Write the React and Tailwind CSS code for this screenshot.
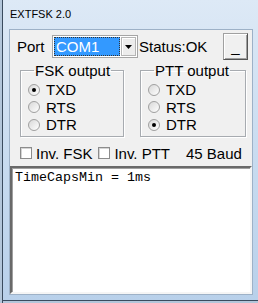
import React from 'react';

const Radio = ({ label, checked }) => (
  <div className="flex items-center h-[17.5px]">
    <span className="flex items-center justify-center w-[12px] h-[12px] rounded-full border border-[#a0a0a0] bg-linear-to-br from-[#d8d8d8] to-white">
      {checked && <span className="w-[4px] h-[4px] rounded-full bg-black" />}
    </span>
    <span className="ml-[6px] leading-[17px]">{label}</span>
  </div>
);

const GroupBox = ({ title, options, selected, className }) => (
  <fieldset
    className={`border border-[#a7abb0] shadow-[inset_1px_1px_0_#fff,1px_1px_0_#fff] pl-[7px] pt-[2px] pb-[2px] ${className}`}
  >
    <legend className="ml-[6px] px-[1px] leading-[17px]">{title}</legend>
    {options.map((opt) => (
      <Radio key={opt} label={opt} checked={opt === selected} />
    ))}
  </fieldset>
);

const CheckBox = ({ label, className }) => (
  <div className={`flex items-center ${className}`}>
    <span className="w-[12px] h-[12px] bg-white border border-[#8c8c8c] shadow-[inset_1px_1px_0_#d4d4d4]" />
    <span className="ml-[4px] leading-[17px]">{label}</span>
  </div>
);

export default function App() {
  return (
    <div className="flex flex-col w-[258px] h-[303px] pl-[10px] pr-[6px] pb-[9px] bg-linear-to-b from-[#dde9f6] via-[#c9dcf0] to-[#b8d0ea] shadow-[inset_2px_0_0_#b3c6da,inset_3px_0_0_#3a4b5e,inset_0_-2px_0_#b3c6da,inset_0_-3px_0_#3a4b5e]">
      {/* title bar */}
      <div className="flex items-center h-[30px] pb-[2px] text-[11px] text-black font-['Liberation_Sans',Arial,sans-serif]">
        EXTFSK 2.0
      </div>

      {/* client area */}
      <div className="flex flex-col w-[242px] h-[264px] bg-[#f0f0f0] shadow-[0_0_0_1px_#9db1c7] text-[15px] text-black font-['Liberation_Sans',Arial,sans-serif]">
        <div className="flex items-center h-[27px] mt-[3px]">
          <span className="w-[42px] pl-[7px] leading-[17px]">Port</span>
          <div className="flex w-[86px] h-[23px] bg-white border border-[#a5a5a5]">
            <div className="flex-1 m-[1px] flex items-center bg-[#3399ff] text-white border border-dotted border-[#333] pl-[1px] leading-[17px]">
              COM1
            </div>
            <div className="flex items-center justify-center w-[15px] my-[1px] mr-[1px] bg-[#ececec] border border-[#b5b5b5] shadow-[inset_1px_1px_0_#fff]">
              <svg width="7" height="4" viewBox="0 0 7 4">
                <path d="M0 0h7L3.5 4z" fill="#000" />
              </svg>
            </div>
          </div>
          <span className="ml-[1px] leading-[17px]">Status:OK</span>
          <button className="ml-auto mr-[4px] w-[25px] h-[27px] flex items-end justify-center pb-[5px] bg-[#f0f0f0] border border-[#a0a0a0] border-r-[#555] border-b-[#555] shadow-[inset_1px_1px_0_#fff,inset_-1px_-1px_0_#a0a0a0] leading-[15px]">
            _
          </button>
        </div>

        <div className="flex mt-[2px]">
          <GroupBox
            title="FSK output"
            options={['TXD', 'RTS', 'DTR']}
            selected="TXD"
            className="ml-[10px] w-[104px]"
          />
          <GroupBox
            title="PTT output"
            options={['TXD', 'RTS', 'DTR']}
            selected="DTR"
            className="ml-[16px] w-[106px]"
          />
        </div>

        <div className="flex items-center mt-[8px]">
          <CheckBox label="Inv. FSK" className="ml-[10px]" />
          <CheckBox label="Inv. PTT" className="ml-[6px]" />
          <span className="ml-[16px] leading-[17px]">45 Baud</span>
        </div>

        <div className="flex-1 mt-[4px] bg-white border-2 border-t-[#696969] border-l-[#696969] border-b-[#f5f5f5] border-r-[#f5f5f5] shadow-[inset_1px_1px_0_#a0a0a0] pl-[3px] pt-[2px] text-[13.33px] leading-[15px] font-['Liberation_Mono','Courier_New',monospace]">
          TimeCapsMin = 1ms
        </div>
      </div>
    </div>
  );
}
